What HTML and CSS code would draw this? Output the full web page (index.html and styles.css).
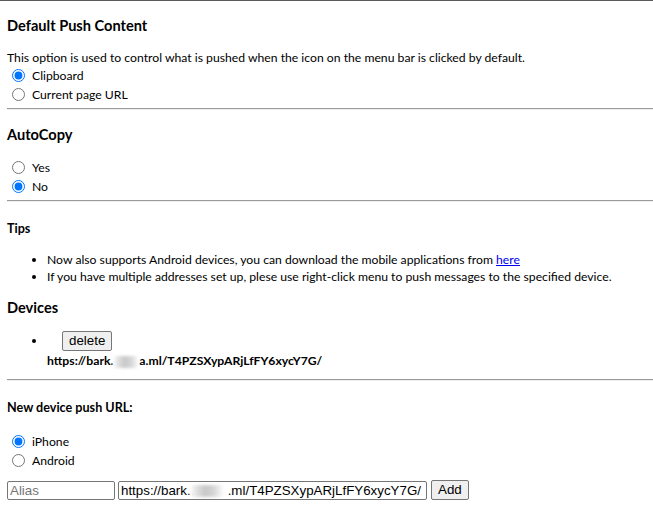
FILE: index.html
```html
<!DOCTYPE html>
<html>
<head>
<meta charset="utf-8">
<link rel="stylesheet" href="styles.css">
</head>
<body>
<div class="page">
  <h3 class="title first">Default Push Content</h3>
  <p class="desc">This option is used to control what is pushed when the icon on the menu bar is clicked by default.</p>
  <label class="row"><input type="radio" name="push" checked><span>Clipboard</span></label>
  <label class="row"><input type="radio" name="push"><span>Current page URL</span></label>
  <hr class="rule">

  <h3 class="title">AutoCopy</h3>
  <label class="row"><input type="radio" name="copy"><span>Yes</span></label>
  <label class="row"><input type="radio" name="copy" checked><span>No</span></label>
  <hr class="rule">

  <h4 class="sub tips">Tips</h4>
  <ul class="tips-list">
    <li>Now also supports Android devices, you can download the mobile applications from <a href="#">here</a></li>
    <li>If you have multiple addresses set up, plese use right-click menu to push messages to the specified device.</li>
  </ul>

  <h3 class="title devices">Devices</h3>
  <ul class="device-list">
    <li><button class="btn del">delete</button><br><b class="url">https://bark.<span class="blur blur-a"></span>a.ml/T4PZSXypARjLfFY6xycY7G/</b></li>
  </ul>
  <hr class="rule rule-dev">

  <h4 class="sub newdev">New device push URL:</h4>
  <label class="row"><input type="radio" name="dev" checked><span>iPhone</span></label>
  <label class="row"><input type="radio" name="dev"><span>Android</span></label>
  <div class="form">
    <input class="field alias" type="text" placeholder="Alias">
    <span class="url-wrap">
      <input class="field urlfield" type="text" value="https://bark..         .ml/T4PZSXypARjLfFY6xycY7G/">
      <span class="blur blur-b"></span>
    </span>
    <button class="btn add">Add</button>
  </div>
</div>
</body>
</html>
```

FILE: styles.css
```css
html, body {
  margin: 0;
  padding: 0;
  background: #fff;
}
body {
  font-family: "Lato", "Noto Sans", sans-serif;
  font-size: 12.2px;
  line-height: 17px;
  color: #000;
  overflow: hidden;
}
.page {
  border-top: 1px solid #5a5a5a;
  padding-left: 7px;
}
.title {
  font-size: 14.6px;
  line-height: 20px;
  font-weight: bold;
  margin: 15px 0 0;
}
.title + .row { margin-top: 13px; }
.sub {
  font-size: 12.6px;
  line-height: 17px;
  font-weight: bold;
  margin: 0;
}
.desc {
  margin: 13px 0 0;
}
.row {
  display: flex;
  align-items: center;
  height: 19px;
}
.row input {
  margin: 0 7px 0 5px;
  width: 13px;
  height: 13px;
}
.rule {
  margin: 4px 0 0;
  border: 0;
  border-top: 1px solid #9a9a9a;
  border-bottom: 1px solid #eee;
  height: 0;
}
.tips { margin-top: 18px; }
.tips-list {
  margin: 14px 0 0;
  padding-left: 40px;
}
.tips-list a { color: #0000ee; }
.devices { margin-top: 13px; }
.device-list {
  margin: 13px 0 0;
  padding-left: 40px;
}
.btn {
  font-family: "Liberation Sans", Arial, sans-serif;
  font-size: 13.33px;
  color: #000;
  background: #efefef;
  border: 1px solid #767676;
  border-radius: 2px;
  padding: 1px 6px;
  height: 20px;
  line-height: 16px;
}
.del { margin-left: 15px; }
.url {
  display: inline-block;
  font-weight: bold;
  margin-top: 1px;
}
.blur {
  display: inline-block;
  background: linear-gradient(90deg, #fff 0%, #e0e0e0 20%, #c8c8c8 45%, #d6d6d6 70%, #fff 100%);
  filter: blur(1.5px);
  vertical-align: middle;
}
.blur-a { width: 26px; height: 12px; }
.rule-dev { margin-top: 10px; }
.newdev { margin-top: 18px; }
.newdev + .row { margin-top: 16px; }
.form {
  display: flex;
  align-items: center;
  gap: 3px;
  margin-top: 10px;
}
.field {
  font-family: "Liberation Sans", Arial, sans-serif;
  font-size: 13.33px;
  height: 19px;
  box-sizing: border-box;
  border: 1px solid #767676;
  border-radius: 2px;
  padding: 1px 2px;
  color: #000;
  margin: 0;
}
.field::placeholder { color: #757575; }
.alias { width: 108px; }
.url-wrap {
  position: relative;
  display: inline-block;
  line-height: 0;
}
.urlfield { width: 309px; }
.blur-b {
  position: absolute;
  left: 72px;
  top: 4px;
  width: 34px;
  height: 12px;
}
.add { margin-left: 1px; height: 20px; }
```
